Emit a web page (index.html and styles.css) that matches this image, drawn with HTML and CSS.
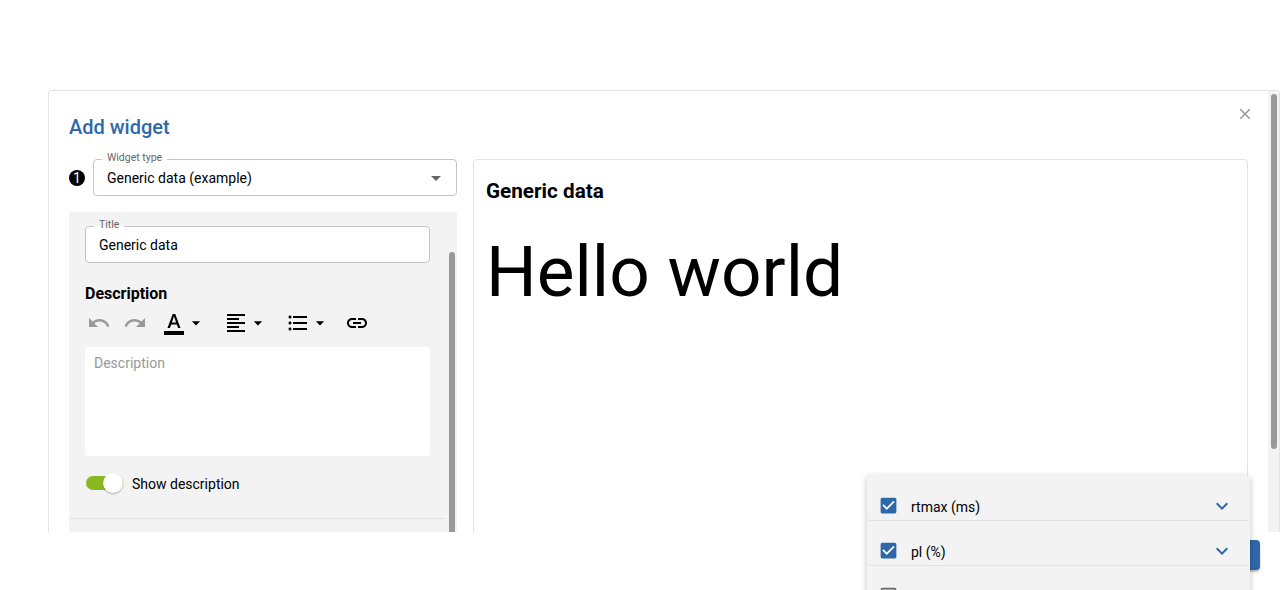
FILE: index.html
```html
<!DOCTYPE html>
<html lang="en">
<head>
<meta charset="utf-8">
<title>Add widget</title>
<link rel="stylesheet" href="styles.css">
</head>
<body>
<div class="modal">
  <div class="dialog">
    <main class="content">
      <header class="header">
        <h1 class="heading">Add widget</h1>
        <svg class="close" viewBox="0 0 24 24"><path d="M19 6.41L17.59 5 12 10.59 6.41 5 5 6.41 10.59 12 5 17.59 6.41 19 12 13.41 17.59 19 19 17.59 13.41 12z"/></svg>
      </header>
      <div class="columns">
        <section class="form">
          <div class="type-row">
            <span class="step">1</span>
            <div class="field select">
              <span class="label">Widget type</span>
              <span class="value">Generic data (example)</span>
              <svg class="icon select-arrow" viewBox="0 0 24 24"><path d="M7 10l5 5 5-5z"/></svg>
            </div>
          </div>
          <div class="panel">
            <div class="panel-body">
              <div class="field"><span class="label">Title</span><span class="value">Generic data</span></div>
              <h2 class="subheading">Description</h2>
              <div class="toolbar">
                <svg class="icon muted" viewBox="0 0 24 24"><path d="M12.5 8c-2.65 0-5.05.99-6.9 2.6L2 7v9h9l-3.62-3.62c1.39-1.16 3.16-1.88 5.12-1.88 3.54 0 6.55 2.31 7.6 5.5l2.37-.78C21.08 11.03 17.15 8 12.5 8z"/></svg>
                <svg class="icon muted redo" viewBox="0 0 24 24"><path d="M18.4 10.6C16.55 8.99 14.15 8 11.5 8c-4.65 0-8.58 3.03-9.96 7.22L3.9 16c1.05-3.19 4.05-5.5 7.6-5.5 1.95 0 3.73.72 5.12 1.88L13 16h9V7l-3.6 3.6z"/></svg>
                <span class="tool color-tool"><svg class="icon" viewBox="0 0 24 24"><path d="M2 20h20v4H2v-4zm3.49-3h2.42l1.27-3.58h5.65L16.09 17h2.42L13.25 3h-2.5L5.49 17zm4.42-5.61 2.03-5.79h.12l2.03 5.79H9.91z"/></svg><svg class="icon caret" viewBox="0 0 24 24"><path d="M7 10l5 5 5-5z"/></svg></span>
                <span class="tool"><svg class="icon" viewBox="0 0 24 24"><path d="M15 15H3v2h12v-2zm0-8H3v2h12V7zM3 13h18v-2H3v2zm0 8h18v-2H3v2zM3 3v2h18V3H3z"/></svg><svg class="icon caret" viewBox="0 0 24 24"><path d="M7 10l5 5 5-5z"/></svg></span>
                <span class="tool"><svg class="icon" viewBox="0 0 24 24"><path d="M4 10.5c-.83 0-1.5.67-1.5 1.5s.67 1.5 1.5 1.5 1.5-.67 1.5-1.5-.67-1.5-1.5-1.5zm0-6c-.83 0-1.5.67-1.5 1.5S3.170 7.500 4 7.500 5.500 6.830 5.500 6 4.830 4.500 4 4.500zm0 12c-.83 0-1.5.68-1.5 1.5s.68 1.5 1.5 1.5 1.5-.68 1.5-1.5-.67-1.5-1.5-1.5zM7 19h14v-2H7v2zm0-6h14v-2H7v2zm0-8v2h14V5H7z"/></svg><svg class="icon caret" viewBox="0 0 24 24"><path d="M7 10l5 5 5-5z"/></svg></span>
                <svg class="icon link" viewBox="0 0 24 24"><path d="M3.900 12c0-1.710 1.390-3.100 3.100-3.100h4V7H7c-2.760 0-5 2.240-5 5s2.240 5 5 5h4v-1.900H7c-1.710 0-3.100-1.390-3.100-3.100zM8 13h8v-2H8v2zm9-6h-4v1.900h4c1.710 0 3.100 1.390 3.100 3.100s-1.390 3.100-3.100 3.100h-4V17h4c2.760 0 5-2.240 5-5s-2.240-5-5-5z"/></svg>
              </div>
              <div class="editor">Description</div>
              <div class="switch-row"><span class="switch"><span class="knob"></span></span><span>Show description</span></div>
              <div class="divider"></div>
            </div>
            <div class="panel-scroll"><div class="panel-thumb"></div></div>
          </div>
        </section>
        <section class="preview">
          <h2 class="preview-title">Generic data</h2>
          <p class="preview-text">Hello world</p>
        </section>
      </div>
    </main>
    <div class="scrollbar"><div class="thumb"></div></div>
  </div>
  <footer class="footer"><div class="save"></div></footer>
</div>
<div class="metrics">
  <div class="metric">
    <svg class="check" viewBox="0 0 24 24"><path d="M19 3H5c-1.110 0-2 .9-2 2v14c0 1.100.890 2 2 2h14c1.110 0 2-.9 2-2V5c0-1.100-.890-2-2-2zm-9 14l-5-5 1.410-1.410L10 14.170l7.590-7.590L19 8l-9 9z"/></svg>
    <span class="metric-name">rtmax (ms)</span>
    <svg class="icon chevron" viewBox="0 0 24 24"><path d="M16.590 8.590L12 13.170 7.410 8.590 6 10l6 6 6-6z"/></svg>
  </div>
  <div class="metric">
    <svg class="check" viewBox="0 0 24 24"><path d="M19 3H5c-1.110 0-2 .9-2 2v14c0 1.100.890 2 2 2h14c1.110 0 2-.9 2-2V5c0-1.100-.890-2-2-2zm-9 14l-5-5 1.410-1.410L10 14.170l7.590-7.590L19 8l-9 9z"/></svg>
    <span class="metric-name">pl (%)</span>
    <svg class="icon chevron" viewBox="0 0 24 24"><path d="M16.590 8.590L12 13.170 7.410 8.590 6 10l6 6 6-6z"/></svg>
  </div>
  <div class="metric">
    <svg class="check off" viewBox="0 0 24 24"><path d="M19 5v14H5V5h14m0-2H5c-1.100 0-2 .9-2 2v14c0 1.100.9 2 2 2h14c1.100 0 2-.9 2-2V5c0-1.100-.9-2-2-2z"/></svg>
  </div>
</div>
</body>
</html>
```
FILE: styles.css
```css
* { box-sizing: border-box; }
body {
  margin: 0;
  height: 590px;
  overflow: hidden;
  background: #fff;
  color: #000;
  font: 14px/20px Roboto, sans-serif;
}
h1, h2, p { margin: 0; }
svg { display: block; flex: none; }
.icon { width: 24px; height: 24px; }
.modal { padding: 90px 0 0 48px; }
.dialog {
  display: flex;
  height: 442px;
  border: 1px solid #e3e3e3;
  border-bottom: 0;
  border-radius: 4px 4px 0 0;
  overflow: hidden;
}
.content { flex: 1; padding: 0 20px; }
.header {
  display: flex;
  justify-content: space-between;
  height: 68px;
}
.heading {
  padding-top: 24px;
  font-size: 20px;
  line-height: 24px;
  font-weight: 500;
  color: #2e68aa;
}
.close { width: 18px; height: 18px; margin: 14px -6px 0 0; fill: #999; }
.columns { display: flex; gap: 16px; height: 374px; }
.form { display: flex; flex-direction: column; width: 388px; }
.type-row { display: flex; align-items: center; gap: 8px; height: 37px; }
.step {
  width: 16px;
  height: 16px;
  border-radius: 50%;
  background: #000;
  color: #fff;
  text-align: center;
  line-height: 16px;
}
.field {
  position: relative;
  display: flex;
  align-items: center;
  height: 37px;
  padding: 0 13px;
  border: 1px solid #c4c4c4;
  border-radius: 4px;
  background: #fff;
}
.select { flex: 1; justify-content: space-between; padding-right: 8px; }
.select-arrow { fill: #666; }
.label {
  position: absolute;
  left: 8px;
  top: -8px;
  padding: 0 5px;
  background: linear-gradient(transparent 7px, #fff 7px);
  color: #666;
  font-size: 10.5px;
  line-height: 12px;
}
.panel {
  display: flex;
  flex: 1;
  margin-top: 16px;
  background: #f3f3f3;
  overflow: hidden;
}
.panel-body { width: 377px; padding: 14px 0 0 16px; }
.panel-body .field { width: 345px; }
.subheading { margin-top: 21px; font-size: 16px; line-height: 20px; font-weight: 700; }
.toolbar { display: flex; align-items: center; height: 24px; margin-top: 7px; padding-left: 2px; }
.muted { fill: #999; }
.redo { margin-left: 12px; }
.tool { display: flex; align-items: center; margin-left: 18px; }
.color-tool { margin-left: 15px; }
.caret { width: 20px; height: 20px; }
.link { margin-left: 15px; }
.editor {
  width: 345px;
  height: 109px;
  margin-top: 12px;
  padding: 6px 9px;
  border-radius: 4px;
  background: #fff;
  color: #999;
}
.switch-row { display: flex; align-items: center; gap: 9px; height: 20px; margin-top: 18px; padding-left: 1px; }
.switch {
  display: flex;
  align-items: center;
  justify-content: flex-end;
  width: 37px;
  height: 14px;
  margin-top: -2px;
  border-radius: 7px;
  background: #88b922;
}
.knob {
  width: 20px;
  height: 20px;
  border-radius: 50%;
  background: #fff;
  box-shadow: 0 1px 2px rgba(0, 0, 0, 0.3);
}
.divider { height: 1px; margin: 24px 0 0 -16px; background: #e3e3e3; }
.panel-scroll { padding: 40px 0 0 3px; }
.panel-thumb { width: 6px; height: 300px; border-radius: 3px; background: #999; }
.preview {
  flex: 1;
  height: 390px;
  padding: 19px 12px;
  border: 1px solid #e3e3e3;
  border-radius: 4px;
}
.preview-title { font-size: 20.7px; line-height: 24px; font-weight: 700; }
.preview-text { margin-top: 27px; font-size: 71.2px; line-height: 84px; }
.scrollbar { width: 11px; padding: 3px 2px 0 3px; background: #f3f3f3; }
.thumb { height: 355px; border-radius: 3px; background: #999; }
.footer { display: flex; justify-content: flex-end; padding: 8px 20px 0 0; }
.save {
  width: 64px;
  height: 30px;
  border-radius: 4px;
  background: #2e68aa;
  box-shadow: 0 2px 2px rgba(0, 0, 0, 0.25);
}
.metrics {
  position: absolute;
  left: 867px;
  top: 475px;
  width: 383px;
  height: 140px;
  border-radius: 4px;
  background: #f3f3f3;
  box-shadow: 0 2px 6px rgba(0, 0, 0, 0.25);
}
.metric {
  display: flex;
  align-items: flex-start;
  height: 45px;
  margin-top: 1px;
  padding: 19px 16px 0 11px;
  border-bottom: 1px solid #e3e3e3;
  border-radius: 4px;
}
.metric + .metric { margin-top: 0; }
.check { width: 21px; height: 21px; margin: 0.4px 0 0 0.4px; fill: #2e68aa; background: linear-gradient(#fff, #fff) center / 14px 14px no-repeat; }
.off { fill: #666; background: none; }
.metric-name { flex: 1; margin-left: 11.6px; padding-top: 2px; }
.chevron { margin-top: -1px; fill: #2e68aa; }
```
